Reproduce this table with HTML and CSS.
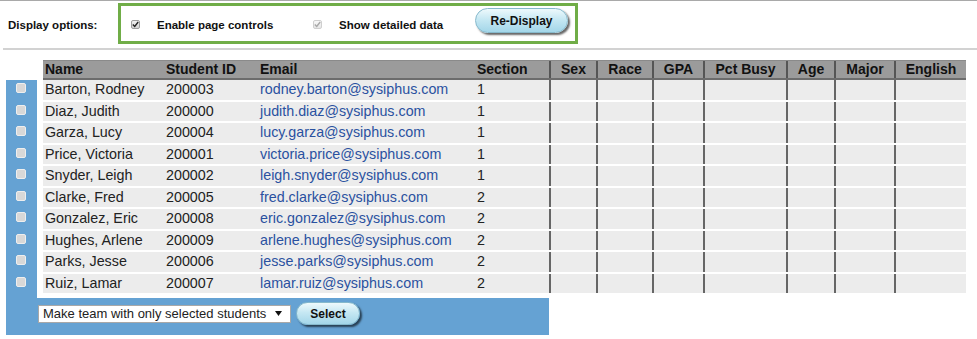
FILE: index.html
```html
<!DOCTYPE html>
<html>
<head>
<meta charset="utf-8">
<title>Roster</title>
<link rel="stylesheet" href="styles.css">
</head>
<body>
<div class="options">
  <div class="opt-label">Display options:</div>
  <div class="opt-box">
    <span class="cb cb-on"><svg width="7" height="7" viewBox="0 0 7 7"><path d="M0.8 3.6 L2.7 5.5 L6.2 1" fill="none" stroke="#222" stroke-width="1.4"/></svg></span>
    <span class="opt-text t1">Enable page controls</span>
    <span class="cb cb-dis"><svg width="7" height="7" viewBox="0 0 7 7"><path d="M0.8 3.6 L2.7 5.5 L6.2 1" fill="none" stroke="#a8a8a8" stroke-width="1.4"/></svg></span>
    <span class="opt-text t2">Show detailed data</span>
    <button class="btn btn-redisplay">Re-Display</button>
  </div>
</div>
<div class="rule"></div>
<div class="roster">
  <div class="thead">
    <div class="th">Name</div>
    <div class="th">Student ID</div>
    <div class="th">Email</div>
    <div class="th">Section</div>
    <div class="th b">Sex</div>
    <div class="th b">Race</div>
    <div class="th b">GPA</div>
    <div class="th b">Pct Busy</div>
    <div class="th b">Age</div>
    <div class="th b">Major</div>
    <div class="th b">English</div>
  </div>
  <div class="panel">
    <div class="panel-body">
      <div class="checks">
        <div class="slot"><span class="rowcb"></span></div>
        <div class="slot"><span class="rowcb"></span></div>
        <div class="slot"><span class="rowcb"></span></div>
        <div class="slot"><span class="rowcb"></span></div>
        <div class="slot"><span class="rowcb"></span></div>
        <div class="slot"><span class="rowcb"></span></div>
        <div class="slot"><span class="rowcb"></span></div>
        <div class="slot"><span class="rowcb"></span></div>
        <div class="slot"><span class="rowcb"></span></div>
        <div class="slot"><span class="rowcb"></span></div>
      </div>
      <div class="tbody">
        <div class="tr"><div class="td">Barton, Rodney</div><div class="td">200003</div><div class="td"><a href="#">rodney.barton@sysiphus.com</a></div><div class="td">1</div><div class="td b"></div><div class="td b"></div><div class="td b"></div><div class="td b"></div><div class="td b"></div><div class="td b"></div><div class="td b"></div></div>
        <div class="tr"><div class="td">Diaz, Judith</div><div class="td">200000</div><div class="td"><a href="#">judith.diaz@sysiphus.com</a></div><div class="td">1</div><div class="td b"></div><div class="td b"></div><div class="td b"></div><div class="td b"></div><div class="td b"></div><div class="td b"></div><div class="td b"></div></div>
        <div class="tr"><div class="td">Garza, Lucy</div><div class="td">200004</div><div class="td"><a href="#">lucy.garza@sysiphus.com</a></div><div class="td">1</div><div class="td b"></div><div class="td b"></div><div class="td b"></div><div class="td b"></div><div class="td b"></div><div class="td b"></div><div class="td b"></div></div>
        <div class="tr"><div class="td">Price, Victoria</div><div class="td">200001</div><div class="td"><a href="#">victoria.price@sysiphus.com</a></div><div class="td">1</div><div class="td b"></div><div class="td b"></div><div class="td b"></div><div class="td b"></div><div class="td b"></div><div class="td b"></div><div class="td b"></div></div>
        <div class="tr"><div class="td">Snyder, Leigh</div><div class="td">200002</div><div class="td"><a href="#">leigh.snyder@sysiphus.com</a></div><div class="td">1</div><div class="td b"></div><div class="td b"></div><div class="td b"></div><div class="td b"></div><div class="td b"></div><div class="td b"></div><div class="td b"></div></div>
        <div class="tr"><div class="td">Clarke, Fred</div><div class="td">200005</div><div class="td"><a href="#">fred.clarke@sysiphus.com</a></div><div class="td">2</div><div class="td b"></div><div class="td b"></div><div class="td b"></div><div class="td b"></div><div class="td b"></div><div class="td b"></div><div class="td b"></div></div>
        <div class="tr"><div class="td">Gonzalez, Eric</div><div class="td">200008</div><div class="td"><a href="#">eric.gonzalez@sysiphus.com</a></div><div class="td">2</div><div class="td b"></div><div class="td b"></div><div class="td b"></div><div class="td b"></div><div class="td b"></div><div class="td b"></div><div class="td b"></div></div>
        <div class="tr"><div class="td">Hughes, Arlene</div><div class="td">200009</div><div class="td"><a href="#">arlene.hughes@sysiphus.com</a></div><div class="td">2</div><div class="td b"></div><div class="td b"></div><div class="td b"></div><div class="td b"></div><div class="td b"></div><div class="td b"></div><div class="td b"></div></div>
        <div class="tr"><div class="td">Parks, Jesse</div><div class="td">200006</div><div class="td"><a href="#">jesse.parks@sysiphus.com</a></div><div class="td">2</div><div class="td b"></div><div class="td b"></div><div class="td b"></div><div class="td b"></div><div class="td b"></div><div class="td b"></div><div class="td b"></div></div>
        <div class="tr"><div class="td">Ruiz, Lamar</div><div class="td">200007</div><div class="td"><a href="#">lamar.ruiz@sysiphus.com</a></div><div class="td">2</div><div class="td b"></div><div class="td b"></div><div class="td b"></div><div class="td b"></div><div class="td b"></div><div class="td b"></div><div class="td b"></div></div>
      </div>
    </div>
    <div class="footer">
      <div class="select"><span>Make team with only selected students</span><svg class="arrow" width="7" height="5" viewBox="0 0 7 5"><path d="M0 0 H7 L3.5 5 Z" fill="#111"/></svg></div>
      <button class="btn btn-select">Select</button>
    </div>
  </div>
</div>
</body>
</html>
```

FILE: styles.css
```css
* { box-sizing: border-box; }

body {
  margin: 0;
  background: #fff;
  color: #222;
  font-family: "Liberation Sans", Arial, sans-serif;
}

.options {
  display: flex;
  align-items: flex-start;
  height: 48px;
  border-top: 1px solid #a9a9a9;
  padding-top: 2px;
}

.opt-label {
  width: 118px;
  padding-left: 8px;
  margin-top: 15px;
  font-size: 11.5px;
  line-height: 14px;
  font-weight: bold;
  color: #111;
}

.opt-box {
  display: flex;
  align-items: flex-start;
  width: 460px;
  height: 41px;
  border: 3px solid #70ad47;
  padding-left: 10px;
}

.cb {
  display: flex;
  align-items: center;
  justify-content: center;
  width: 9px;
  height: 9px;
  margin-top: 14px;
  border: 1px solid #9e9e9e;
  border-radius: 2px;
  background: linear-gradient(#f2f2f2, #d4d4d4);
}

.cb-dis {
  border-color: #cfcfcf;
  background: linear-gradient(#f8f8f8, #e6e6e6);
}

.opt-text {
  margin-left: 17px;
  margin-top: 12px;
  font-size: 11.5px;
  line-height: 14px;
  font-weight: bold;
  color: #111;
  white-space: nowrap;
}

.t1 { width: 156px; }
.t2 { width: 136px; }

.btn {
  padding: 0;
  font-family: "Liberation Sans", Arial, sans-serif;
  font-size: 12px;
  font-weight: bold;
  color: #111;
  border: 1px solid #86b9cc;
  border-radius: 13px;
  background: linear-gradient(#eef9fc 0%, #c6e8f3 45%, #a3d6e9 100%);
  box-shadow: 2px 2px 2px rgba(0, 0, 0, 0.6);
}

.btn-redisplay {
  width: 93px;
  height: 25px;
  margin-top: 2px;
}

.rule {
  height: 2px;
  margin-left: 3px;
  background: #d2d2d2;
}

.roster {
  margin-top: 10px;
}

.thead,
.tr {
  display: grid;
  grid-template-columns: 121px 94px 217px 74px 47px 56px 51px 83px 48px 60px 72px;
}

.thead {
  width: 923px;
  height: 20px;
  margin-left: 43px;
  background: #9b9b9b;
  border-top: 1px solid #8a8a8a;
  border-bottom: 2px solid #6c6c6c;
  font-size: 14px;
  line-height: 17px;
  font-weight: bold;
  color: #111;
}

.th {
  padding-left: 2px;
  white-space: nowrap;
}

.th.b {
  padding-left: 0;
  text-align: center;
  border-left: 2px solid #555;
}

.panel {
  width: 543px;
  margin-left: 6px;
  background: #65a2d3;
  padding-bottom: 10px;
}

.panel-body {
  display: flex;
}

.checks {
  flex-shrink: 0;
  width: 31px;
  display: flex;
  flex-direction: column;
  gap: 2px;
}

.slot {
  height: 19.5px;
  padding: 3px 0 0 10px;
}

.rowcb {
  display: block;
  width: 10px;
  height: 10px;
  background: #d8d8d8;
  border: 1px solid #eeeeee;
  border-radius: 2px;
}

.tbody {
  flex-shrink: 0;
  width: 929px;
  background: #fff;
  padding: 0 0 5px 6px;
  display: flex;
  flex-direction: column;
  gap: 2px;
}

.tr {
  height: 19.5px;
  background: #ececec;
  font-size: 14.3px;
  line-height: 19px;
  color: #222;
}

.td {
  padding-left: 2px;
  white-space: nowrap;
}

.td.b {
  border-left: 2px solid #666;
}

.td a {
  color: #2a51a0;
  text-decoration: none;
}

.footer {
  display: flex;
  align-items: center;
  gap: 5px;
  height: 23px;
  margin-top: 4px;
  padding-left: 32px;
}

.select {
  display: flex;
  align-items: center;
  justify-content: space-between;
  width: 253px;
  height: 18px;
  padding: 0 8px 0 4px;
  background: #fff;
  border: 1px solid #a8a8a8;
  font-size: 13px;
  line-height: 16px;
  color: #222;
  white-space: nowrap;
}

.arrow {
  flex-shrink: 0;
}

.btn-select {
  width: 64px;
  height: 23px;
}
```
